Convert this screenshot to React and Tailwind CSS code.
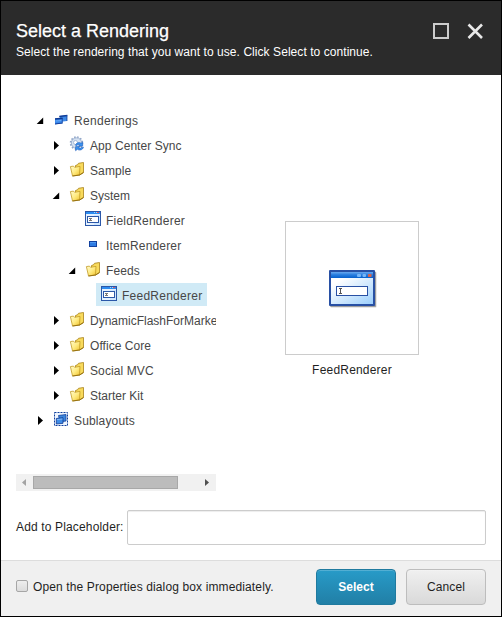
import React from 'react';

function FolderIcon() {
  return (
    <svg width="16" height="16" viewBox="0 0 16 16" className="block">
      <defs>
        <linearGradient id="folder" x1="0" y1="0" x2="1" y2="1">
          <stop offset="0" stopColor="#fffbd0" />
          <stop offset=".5" stopColor="#ffec85" />
          <stop offset="1" stopColor="#f0c22c" />
        </linearGradient>
      </defs>
      <path d="M6.500 12V4.500l2-.7 1-1.500 5-.8v10.200L10.500 14z" fill="#f8da5c" stroke="#a8821a" strokeWidth=".8" />
      <path d="M1.400 5.600l3-.5 1.200 1.200 5.400-.9-.5 8.600-7 1z" fill="url(#folder)" stroke="#c39a24" strokeWidth=".8" />
      <path d="M3.500 15l7-1 3.900-2.500" fill="none" stroke="#8f6a0b" strokeWidth=".9" />
    </svg>
  );
}

function WindowsIcon() {
  return (
    <svg width="16" height="16" viewBox="0 0 16 16" className="block">
      <path d="M6.500 5l7.500-1v6l-6 .8z" fill="#3f8ae6" />
      <path d="M6.300 4.800l8-1v1.500l-8 .9z" fill="#123c96" />
      <path d="M13.500 4.300h.9v5.800h-.9z" fill="#1b4aa4" />
      <path d="M2 7.500l7.500-.8v5.800L2 13.200z" fill="#3a88ea" />
      <path d="M2 7.300l7.500-.8v1.400L2 8.700z" fill="#0d3791" />
      <path d="M2 12.400l7.500-.8v1L2 13.400zM8.800 7h.8v5.500h-.8z" fill="#163f9b" />
      <path d="M2.800 9.400l5.500-.5v1l-5.500.5z" fill="#69a9f4" />
    </svg>
  );
}

function SyncIcon() {
  return (
    <svg width="16" height="16" viewBox="0 0 16 16" className="block">
      <circle cx="7.500" cy="7" r="5.200" fill="#d5e1f1" stroke="#9fb4d2" />
      <circle cx="7.500" cy="7" r="6" fill="none" stroke="#8da3c7" strokeWidth="1.500" strokeDasharray="1.500 1.640" />
      <circle cx="6.500" cy="6.500" r="2" fill="#fff" stroke="#9bb0cf" strokeWidth=".8" />
      <path d="M6.500 9.300c.6-2.600 3.700-3.500 5.600-2l1.600-1.200v4H9.500l1.300-1.200c-1.200-.8-2.400-.5-3 .6z" fill="#3b93f0" stroke="#1453b4" strokeWidth=".5" />
      <path d="M14.500 11.200c-.7 2.700-4 3.700-6.200 2.100L6.600 14.800v-4.200h4.200l-1.300 1.200c1.300.8 2.700.4 3.200-.6z" fill="#3b93f0" stroke="#1453b4" strokeWidth=".5" />
    </svg>
  );
}

function FieldIcon() {
  return (
    <svg width="16" height="16" viewBox="0 0 16 16" className="block" shapeRendering="crispEdges">
      <path d="M0 0h16v15H0z" fill="#2b57a8" />
      <path d="M1 1h14v2H1z" fill="#2b8cf0" />
      <path d="M9 1h1v1H9zM11 1h1v1h-1z" fill="#a9d2fb" />
      <path d="M12 1h2v1h-2z" fill="#d0586a" />
      <path d="M1 3h14v11H1z" fill="#e4f1ff" />
      <path d="M9 4h6v10H9z" fill="#cfe6ff" />
      <path d="M2 5h12v7H2z" fill="#2b57a8" />
      <path d="M3 6h10v5H3z" fill="#fff" />
      <path d="M4 7h3v1H4zM5 8h1v1H5zM4 9h3v1H4z" fill="#777" />
    </svg>
  );
}

function ItemIcon() {
  return (
    <svg width="16" height="16" viewBox="0 0 16 16" className="block" shapeRendering="crispEdges">
      <path d="M4 5h8v6H4z" fill="#12419f" />
      <path d="M5 6h6v4H5z" fill="#2f7de3" />
      <path d="M5 6h6v1H5z" fill="#4f98f0" />
    </svg>
  );
}

function SublayoutIcon() {
  return (
    <svg width="16" height="16" viewBox="0 0 16 16" className="block">
      <path d="M1.500 1.500h13v13h-13z" fill="#eef5ff" stroke="#0f3f9c" strokeDasharray="2 1" />
      <path d="M5.500 4.500l7.500-1v6.500l-6 .8z" fill="#3c86dd" stroke="#123f9b" strokeWidth=".8" />
      <path d="M3.300 7.500l6.700-.8v5.600l-6.700.7z" fill="#3f8ce6" stroke="#0d3791" strokeWidth=".8" />
      <path d="M4 8.600l5.500-.6" stroke="#7fb6f5" />
    </svg>
  );
}

function PreviewIcon() {
  return (
    <svg width="48" height="40" viewBox="0 0 48 40" className="block">
      <defs>
        <linearGradient id="pane" x1="0" y1="0" x2="1" y2="1">
          <stop offset="0.150" stopColor="#ffffff" />
          <stop offset="1" stopColor="#9ccffc" />
        </linearGradient>
        <linearGradient id="bar" x1="0" y1="0" x2="0" y2="1">
          <stop offset="0" stopColor="#6aaaf0" />
          <stop offset=".45" stopColor="#2a7fe0" />
          <stop offset="1" stopColor="#0560cd" />
        </linearGradient>
      </defs>
      <rect x="1.500" y="2" width="46" height="35.500" rx="1" fill="#777" opacity=".35" />
      <rect x="1" y="1.500" width="46" height="35.500" rx="1" fill="#555" opacity=".4" />
      <rect x="0" y="0" width="46" height="36" rx="1" fill="#2850a4" />
      <rect x="2" y="2" width="42" height="6" fill="url(#bar)" />
      <rect x="2" y="8" width="42" height="26" fill="url(#pane)" />
      <rect x="28" y="4" width="4" height="3" rx="1" fill="#77b6f7" />
      <rect x="33.500" y="4" width="3.500" height="3" rx="1" fill="#77b6f7" />
      <rect x="39" y="4" width="3.500" height="3" rx=".5" fill="#d9644a" />
      <rect x="7.500" y="16.500" width="31" height="9" fill="#fff" stroke="#2850a4" />
      <path d="M10 18.500h3M10 23.500h3M11.500 18.500v5" stroke="#555" fill="none" />
    </svg>
  );
}

function Arrow({ open }) {
  return (
    <svg width="17" height="25" viewBox="0 0 17 25" className="block shrink-0">
      {open ? <path d="M7.200 9.500v6.500H.7z" /> : <path d="M2 8l5 4.500L2 17z" />}
    </svg>
  );
}

const rows = [
  { label: 'Renderings', pad: 'pl-5', icon: WindowsIcon, open: true, track: 'tracking-[0.3px]' },
  { label: 'App Center Sync', pad: 'pl-9', icon: SyncIcon, open: false, track: 'tracking-[0.06px]' },
  { label: 'Sample', pad: 'pl-9', icon: FolderIcon, open: false, track: 'tracking-[0.1px]' },
  { label: 'System', pad: 'pl-9', icon: FolderIcon, open: true, track: 'tracking-normal' },
  { label: 'FieldRenderer', pad: 'pl-[52px]', icon: FieldIcon, track: 'tracking-[0.23px]' },
  { label: 'ItemRenderer', pad: 'pl-[52px]', icon: ItemIcon, track: 'tracking-[0.16px]' },
  { label: 'Feeds', pad: 'pl-[52px]', icon: FolderIcon, open: true, track: 'tracking-[0.1px]' },
  { label: 'FeedRenderer', pad: 'pl-[63px]', icon: FieldIcon, selected: true, track: 'tracking-[0.25px]' },
  { label: 'DynamicFlashForMarketing', pad: 'pl-9', icon: FolderIcon, open: false, track: 'tracking-normal' },
  { label: 'Office Core', pad: 'pl-9', icon: FolderIcon, open: false, track: 'tracking-[0.05px]' },
  { label: 'Social MVC', pad: 'pl-9', icon: FolderIcon, open: false, track: 'tracking-[0.1px]' },
  { label: 'Starter Kit', pad: 'pl-9', icon: FolderIcon, open: false, track: 'tracking-normal' },
  { label: 'Sublayouts', pad: 'pl-5', icon: SublayoutIcon, open: false, track: 'tracking-[0.15px]' },
];

function Row({ row }) {
  const Icon = row.icon;
  return (
    <div className={`flex h-[25px] items-start ${row.pad}`}>
      {row.open !== undefined ? <Arrow open={row.open} /> : <span className="w-[17px] shrink-0" />}
      <div className={`flex h-[23px] shrink-0 items-start whitespace-nowrap ${row.selected ? 'bg-[#d0eaf6] pr-[5px] pl-[5px]' : ''}`}>
        <div className="shrink-0 pt-[3px]">
          <Icon />
        </div>
        <span className={`ml-[5px] leading-[27px] ${row.track}`}>{row.label}</span>
      </div>
    </div>
  );
}

export default function App() {
  return (
    <div className="flex h-[617px] w-[502px] flex-col overflow-hidden border border-black bg-white font-['Liberation_Sans',Arial,sans-serif] text-[12px] text-[#1f1f1f]">
      <header className="flex h-[74px] shrink-0 items-start justify-between bg-[#2b2b2b] pr-[17px] pl-[15px] text-white">
        <div className="pt-[19px]">
          <h1 className="text-[18px] leading-[22px] [-webkit-text-stroke:0.25px_white]">Select a Rendering</h1>
          <p className="text-[12px] leading-[20px] tracking-[0.06px]">Select the rendering that you want to use. Click Select to continue.</p>
        </div>
        <div className="flex gap-[18px] pt-[22px]">
          <span className="size-4 border-2 border-[#cccccc]" />
          <svg width="17" height="17" viewBox="0 0 17 17">
            <path d="M1.500 1.500l13.500 13.500M15 1.500L1.500 15" stroke="#e8e8e8" strokeWidth="2.600" />
          </svg>
        </div>
      </header>

      <main className="flex h-[485px] shrink-0 flex-col pl-[15px]">
        <div className="flex h-[416px]">
          <div className="flex w-[200px] flex-col overflow-hidden pt-[33px] text-[#474747]">
            <div className="h-[366px]">
              {rows.map((row) => (
                <Row key={row.label} row={row} />
              ))}
            </div>
            <div className="flex h-[17px] shrink-0 items-center bg-[#f1f1f1]">
              <svg width="17" height="17" viewBox="0 0 17 17">
                <path d="M10 5v7L6 8.500z" fill="#a3a3a3" />
              </svg>
              <div className="h-[13px] w-[145px] border border-[#a8a8a8] bg-[#bcbcbc]" />
              <div className="grow" />
              <svg width="17" height="17" viewBox="0 0 17 17">
                <path d="M6 5v7l4-3.500z" fill="#505050" />
              </svg>
            </div>
          </div>
          <div className="ml-[69px] flex w-[134px] flex-col items-center pt-[146px]">
            <div className="h-[134px] w-[134px] border border-[#cccccc] pt-[48px] pl-[43px]">
              <PreviewIcon />
            </div>
            <span className="mt-[5px] leading-5 tracking-[0.2px]">FeedRenderer</span>
          </div>
        </div>
        <div className="mt-[19px] flex h-[35px] items-center">
          <label className="w-[111px] whitespace-nowrap pb-0.5 tracking-[0.15px]">Add to Placeholder:</label>
          <input className="h-[35px] w-[359px] rounded-[2px] border border-[#cccccc] shadow-[inset_0_1px_1px_rgba(0,0,0,0.075)] outline-none" />
        </div>
      </main>

      <footer className="flex h-[56px] shrink-0 items-center border-t border-[#dddddd] bg-[#f0f0f0] px-[15px] pb-1">
        <span className="mb-px size-3 rounded-[2px] border border-[#a6a6a6] bg-linear-to-b from-[#eeeeee] to-[#dcdcdc]" />
        <span className="ml-[5px] tracking-[0.125px]">Open the Properties dialog box immediately.</span>
        <div className="ml-auto flex gap-[10px]">
          <button className="h-9 w-20 rounded-[4px] border border-[#1f7a9f] bg-linear-to-b from-[#289bc8] to-[#217fa6] font-bold text-white shadow-[inset_0_1px_0_rgba(255,255,255,0.2)]">
            Select
          </button>
          <button className="h-9 w-20 rounded-[4px] border border-[#bdbdbd] bg-linear-to-b from-[#f0f0f0] to-[#d9d9d9] tracking-[0.1px] shadow-[inset_0_1px_0_rgba(255,255,255,0.2)]">
            Cancel
          </button>
        </div>
      </footer>
    </div>
  );
}
